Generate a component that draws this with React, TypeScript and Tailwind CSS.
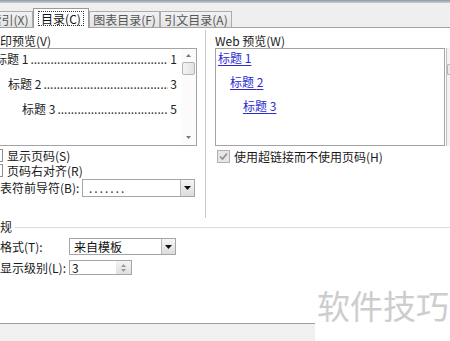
import React from 'react';

const font = "font-['Noto_Sans_CJK_SC',sans-serif]";

const Box: React.FC<{ checked?: boolean; disabled?: boolean }> = ({ checked, disabled }) => (
  <span
    className={`flex h-[13px] w-[13px] shrink-0 items-center justify-center border ${
      disabled ? 'border-[#b1b1b1] bg-[#e6e6e6]' : 'border-[#8e8f8f] bg-white'
    }`}
  >
    {checked && (
      <svg width="9" height="9" viewBox="0 0 9 9">
        <path d="M1 4.5 L3.5 7 L8 1.5" fill="none" stroke={disabled ? '#8d8d8d' : '#222'} strokeWidth="1.6" />
      </svg>
    )}
  </span>
);

const Arrow = () => (
  <span className="flex h-full w-[14px] items-center justify-center border-l border-[#b8b8b8] bg-gradient-to-b from-[#f6f6f6] to-[#dcdcdc]">
    <svg width="7" height="4" viewBox="0 0 7 4">
      <path d="M0 0 H7 L3.5 4 Z" fill="#111" />
    </svg>
  </span>
);

const TocLine: React.FC<{ level: number; page: string; first?: boolean }> = ({ level, page, first }) => {
  const pad = level === 1 ? 'pl-[6px]' : level === 2 ? 'pl-[19px]' : 'pl-[33px]';
  return (
    <div className={`flex h-[18px] min-w-0 items-center pr-[4px] text-[12px] leading-[18px] text-[#222] ${pad} ${first ? '' : 'mt-[7px]'}`}>
      <span className="shrink-0">标题 {level}</span>
      <span className="mx-[2px] min-w-0 flex-1 overflow-hidden whitespace-nowrap text-[#333]">
        ..................................................................
      </span>
      <span className="shrink-0">{page}</span>
    </div>
  );
};

const WebLine: React.FC<{ level: number; first?: boolean }> = ({ level, first }) => {
  const pad = level === 1 ? 'pl-[2px]' : level === 2 ? 'pl-[14px]' : 'pl-[27px]';
  return (
    <div className={`flex h-[18px] items-center text-[12px] leading-[18px] ${pad} ${first ? '' : 'mt-[6px]'}`}>
      <span className="text-[#2b2bd0] underline underline-offset-2">标题 {level}</span>
    </div>
  );
};

const Tab: React.FC<{ label: string; w: string; active?: boolean }> = ({ label, w, active }) =>
  active ? (
    <div className={`relative z-10 -mb-px flex h-[20px] items-center justify-center border border-b-0 border-[#9a9a9a] bg-white ${w}`}>
      <span className="border border-dotted border-[#333] px-[2px] text-[12px] leading-[13px] text-[#111]">{label}</span>
    </div>
  ) : (
    <div className={`flex h-[16px] items-center justify-center border border-b-0 border-[#acacac] bg-gradient-to-b from-[#f2f2f2] to-[#e3e3e3] text-[12px] text-[#555] ${w}`}>
      {label}
    </div>
  );

export default function App() {
  return (
    <div className={`relative flex h-[341px] w-[450px] flex-col overflow-hidden bg-white ${font}`}>
      <div className="h-[3px] shrink-0 bg-gradient-to-b from-[#8f9aa6] to-[#c9ced4]" />
      <div className="flex h-[25px] shrink-0 items-end border-b border-[#a4a4a4] bg-[#efefef]">
        <div className="-ml-[15px] flex items-end">
          <Tab label="索引(X)" w="w-[48px]" />
          <Tab label="目录(C)" w="w-[56px]" active />
          <Tab label="图表目录(F)" w="w-[71px]" />
          <Tab label="引文目录(A)" w="w-[72px]" />
        </div>
      </div>

      <div className="-ml-[12px] flex w-[462px] flex-col text-[12px] text-[#1a1a1a]">
        <div className="flex h-[192px]">
          <div className="w-[217px] shrink-0">
            <div className="mt-[6px] h-[14px] leading-[14px]">打印预览(V)</div>
            <div className="flex h-[98px] w-[209px] overflow-hidden border border-[#a3a3a3] bg-white">
              <div className="min-w-0 flex-1 pt-[1px]">
                <TocLine level={1} page="1" first />
                <TocLine level={2} page="3" />
                <TocLine level={3} page="5" />
              </div>
              <div className="flex w-[15px] shrink-0 flex-col items-center bg-[#fbfbfb] pt-[5px]">
                <svg width="5" height="3" viewBox="0 0 5 3">
                  <path d="M0 3 L2.5 0 L5 3 Z" fill="#777" />
                </svg>
                <div className="mt-[5px] h-[13px] w-[13px] rounded-[2px] border border-[#b5b5b5] bg-gradient-to-r from-[#f4f4f4] to-[#e2e2e2]" />
                <div className="flex-1" />
                <svg width="5" height="3" viewBox="0 0 5 3" className="mb-[6px]">
                  <path d="M0 0 L5 0 L2.5 3 Z" fill="#777" />
                </svg>
              </div>
            </div>
            <div className="mt-[2px] flex h-[15px] items-center gap-[4px] pl-[2px]">
              <Box />
              <span>显示页码(S)</span>
            </div>
            <div className="flex h-[15px] items-center gap-[4px] pl-[2px]">
              <Box />
              <span>页码右对齐(R)</span>
            </div>
            <div className="mt-[1px] flex h-[18px] items-center">
              <span className="w-[94px] shrink-0">制表符前导符(B):</span>
              <div className="flex h-[18px] w-[113px] items-center border border-[#a5a5a5] bg-white pl-[6px]">
                <span className="flex-1 tracking-[2px] text-[#333]">.......</span>
                <Arrow />
              </div>
            </div>
          </div>

          <div className="mt-[2px] flex h-[188px] flex-1 border-l border-[#c8c8c8] pl-[9px] pt-[4px]">
            <div className="w-[230px] shrink-0">
              <div className="h-[14px] leading-[14px]">Web 预览(W)</div>
              <div className="h-[98px] border border-[#a3a3a3] bg-white">
                <WebLine level={1} first />
                <WebLine level={2} />
                <WebLine level={3} />
              </div>
              <div className="mt-[3px] flex h-[15px] items-center gap-[4px] pl-[2px]">
                <Box checked disabled />
                <span>使用超链接而不使用页码(H)</span>
              </div>
            </div>
            <div className="ml-[1px] mt-[14px] h-[98px] w-[8px] border-l border-[#c0c0c0] bg-[#f3f3f3] pt-[16px]">
              <div className="h-[11px] w-[6px] rounded-l-[2px] border border-r-0 border-[#b5b5b5] bg-[#ececec]" />
            </div>
          </div>
        </div>

        <div className="flex h-[14px] items-center gap-[3px]">
          <span className="leading-[14px]">常规</span>
          <div className="flex-1 border-t border-[#dcdcdc]" />
        </div>
        <div className="mt-[4px] flex h-[17px] items-center pl-[12px]">
          <span className="w-[69px] shrink-0">格式(T):</span>
          <div className="flex h-[17px] w-[107px] items-center border border-[#a5a5a5] bg-white pl-[4px]">
            <span className="flex-1 text-[#111]">来自模板</span>
            <Arrow />
          </div>
        </div>
        <div className="mt-[5px] flex h-[15px] items-center pl-[12px]">
          <span className="w-[69px] shrink-0">显示级别(L):</span>
          <div className="flex h-[15px] w-[63px] items-center border border-[#a5a5a5] bg-white pl-[2px]">
            <span className="flex-1 leading-[13px]">3</span>
            <div className="flex h-full w-[15px] flex-col items-center justify-center gap-[2px] bg-gradient-to-b from-[#f4f4f4] to-[#e0e0e0]">
              <svg width="5" height="3" viewBox="0 0 5 3">
                <path d="M0 3 L2.5 0 L5 3 Z" fill="#9a9a9a" />
              </svg>
              <svg width="5" height="3" viewBox="0 0 5 3">
                <path d="M0 0 L5 0 L2.5 3 Z" fill="#9a9a9a" />
              </svg>
            </div>
          </div>
        </div>
      </div>

      <div className="flex-1" />
      <div className="h-[18px] w-[315px] shrink-0 border-t border-[#a0a0a0] bg-[#f0f0f0]" />

      <div className="absolute left-[317px] top-[289px] text-[33px] leading-none text-[#cdcdcd]">
        软件技巧
      </div>
    </div>
  );
}
